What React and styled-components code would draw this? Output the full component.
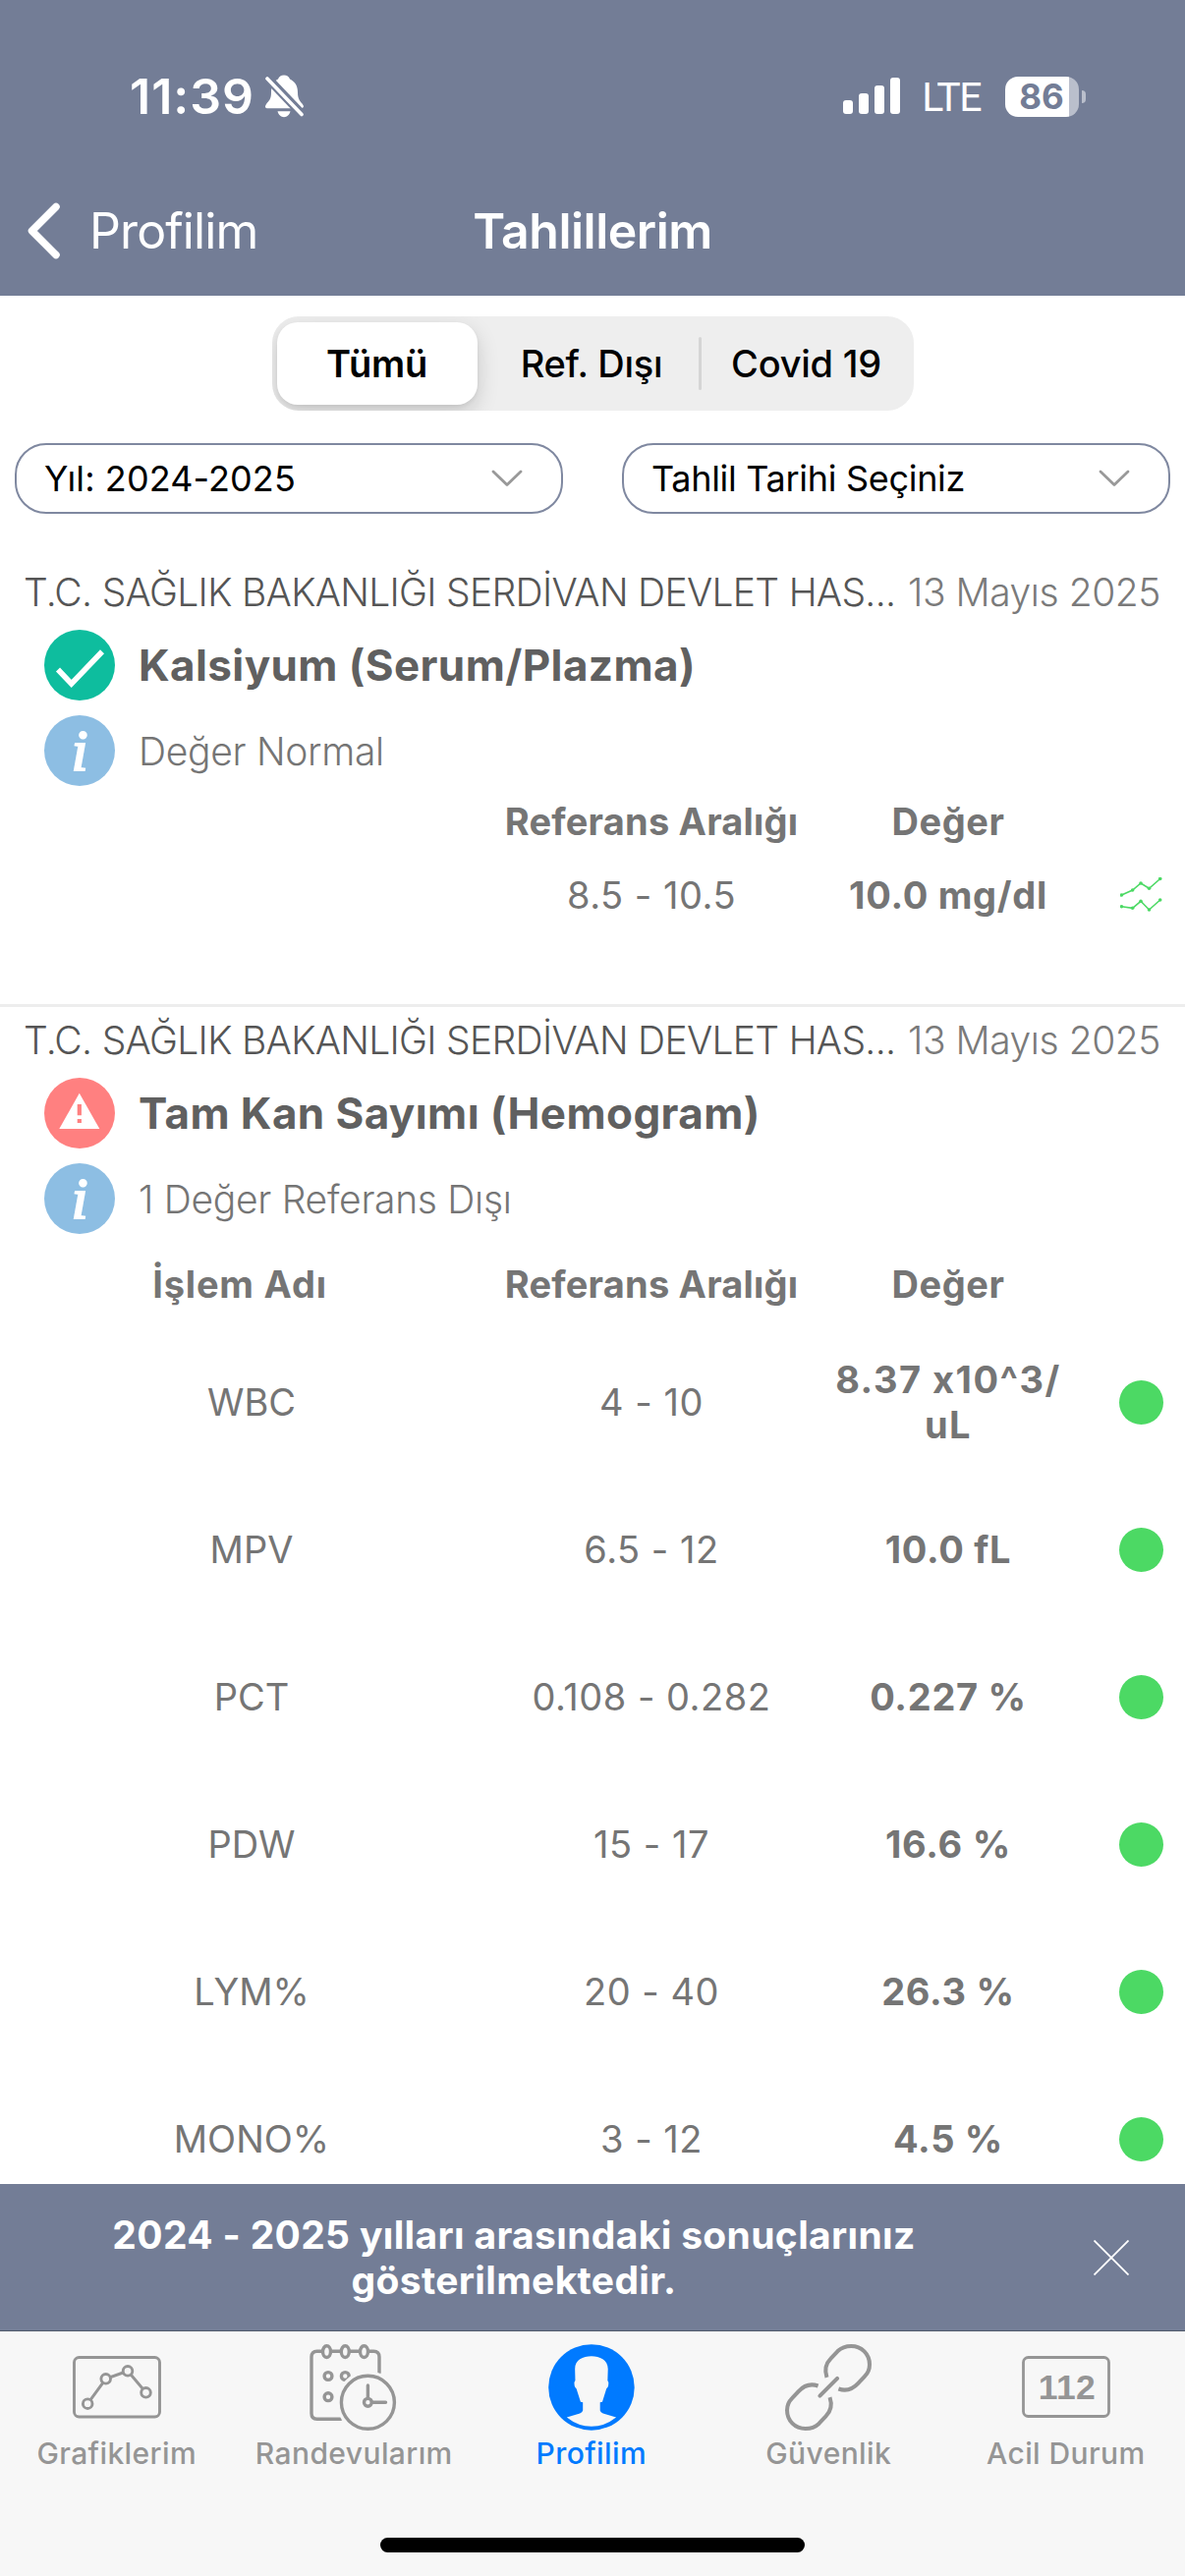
import React, { Component } from 'react'
import styled, { createGlobalStyle, ThemeProvider } from 'styled-components'

const theme = {
    primary: '#737D96',
    active: '#007AFF',
    inactive: '#959595',
    ok: '#4CD964',
    text: '#757575'
}

const GlobalStyle = createGlobalStyle`
    body {
        margin: 0;
        background: #FFF;
        font-family: Inter, "Liberation Sans", sans-serif;
        font-feature-settings: "calt" 0;
    }
    * { box-sizing: border-box; }
    svg { display: block; flex: none; }
`;

const Screen = styled.div`
    display: flex;
    flex-direction: column;
    width: 1206px;
    height: 2622px;
    overflow: hidden;
    background: #FFF;
`;

//header
const Header = styled.header`
    flex: none;
    height: 301px;
    color: #FFF;
    background: ${props => props.theme.primary};
`;

const StatusBar = styled.div`
    display: flex;
    align-items: center;
    justify-content: space-between;
    height: 169px;
    padding: 27px 101px 0 132px;
`;

const Clock = styled.div`
    display: flex;
    align-items: center;
    gap: 11px;
    font-size: 50px;
    font-weight: 600;
    letter-spacing: 1px;
`;

const StatusRight = styled.div`
    display: flex;
    align-items: center;
`;

const Network = styled.span`
    margin: 2px 25px 0 22px;
    font-family: Roboto, sans-serif;
    font-size: 41px;
    font-weight: 400;
    letter-spacing: -1.5px;
`;

const Battery = styled.div`
    display: flex;
    align-items: center;
    justify-content: center;
    width: 75px;
    height: 41px;
    padding-right: 1px;
    border-radius: 13px;
    font-size: 35px;
    font-weight: 700;
    color: ${props => props.theme.primary};
    background: linear-gradient(to right, #FFF 65px, #BABFCC 65px);
`;

const BatteryTip = styled.div`
    width: 4px;
    height: 13px;
    margin-left: 3px;
    border-radius: 0 4px 4px 0;
    background: #BABFCC;
`;

const NavBar = styled.div`
    display: grid;
    grid-template-columns: 1fr auto 1fr;
    align-items: center;
    height: 132px;
    padding: 0 28px;
`;

const BackButton = styled.div`
    display: flex;
    align-items: center;
    gap: 29px;
    font-size: 50px;
    font-weight: 400;
    letter-spacing: -.9px;
`;

const NavTitle = styled.div`
    font-size: 50px;
    font-weight: 600;
    letter-spacing: -.5px;
`;

//filters
const Segmented = styled.div`
    flex: none;
    display: flex;
    align-items: center;
    align-self: center;
    width: 653px;
    height: 96px;
    margin-top: 21px;
    padding: 0 5px;
    border-radius: 27px;
    background: #EEE;
    overflow: hidden;
`;

const Segment = styled.div`
    flex: none;
    display: flex;
    align-items: center;
    justify-content: center;
    width: ${props => props.$width}px;
    height: 84px;
    margin-right: ${props => props.$selected ? 8 : 0}px;
    border-radius: 21px;
    font-size: 38px;
    letter-spacing: -.25px;
    color: #000;
    font-weight: ${props => props.$selected ? 600 : 500};
    background: ${props => props.$selected ? '#FFF' : 'transparent'};
    box-shadow: ${props => props.$selected ? '0 8px 22px rgba(0,0,0,.16), 0 2px 4px rgba(0,0,0,.06)' : 'none'};
`;

const SegmentLine = styled.div`
    flex: none;
    width: 3px;
    height: 54px;
    border-radius: 2px;
    background: #D5D5D5;
`;

const Filters = styled.div`
    flex: none;
    display: flex;
    justify-content: space-between;
    margin-top: 33px;
    padding: 0 15px;
`;

const Select = styled.div`
    display: flex;
    align-items: center;
    justify-content: space-between;
    width: 558px;
    height: 72px;
    padding: 0 39px 0 28px;
    border: 2px solid #7F88A0;
    border-radius: 32px;
    font-size: 36px;
    letter-spacing: ${props => props.$spacing || 0}px;
    color: #000;
`;

//results
const List = styled.main`
    flex: 1;
    min-height: 0;
    margin-top: 46px;
    overflow: hidden;
`;

const Section = styled.section`
    height: ${props => props.$height || 'auto'};
    border-bottom: 3px solid #EDEDED;
`;

const SectionHead = styled.div`
    display: flex;
    align-items: center;
    justify-content: space-between;
    height: 66px;
    padding: 0 25px 0 24px;
    font-size: 39px;
    font-weight: 300;
    white-space: nowrap;
`;

const Hospital = styled.span`
    color: #555;
    letter-spacing: -.7px;
`;

const DateText = styled.span`
    color: #7A7A7A;
    letter-spacing: -.45px;
`;

const Line = styled.div`
    display: flex;
    align-items: center;
    gap: 24px;
    height: 72px;
    margin-top: ${props => props.$top}px;
    padding-left: 45px;
`;

const TestName = styled.h2`
    margin: 0;
    font-size: 44px;
    font-weight: 700;
    color: #606060;
    letter-spacing: .4px;
`;

const Summary = styled.span`
    font-size: 39px;
    font-weight: 300;
    letter-spacing: -.3px;
    color: ${props => props.theme.text};
`;

const Row = styled.div`
    display: grid;
    grid-template-columns: 512px 302px 302px 90px;
    align-items: center;
    justify-items: center;
    height: ${props => props.$height}px;
    padding-top: ${props => props.$top || 0}px;
    font-size: 38px;
    line-height: 46px;
    color: ${props => props.theme.text};
`;

const HeadCell = styled.span`
    font-weight: 700;
    letter-spacing: ${props => props.$spacing || .2}px;
    padding-right: ${props => props.$shift || 0}px;
`;

const Range = styled.span`
    letter-spacing: .5px;
`;

const Value = styled.span`
    font-weight: 700;
    letter-spacing: ${props => props.$spacing || .7}px;
    text-align: center;
    white-space: pre-line;
`;

const Dot = styled.div`
    width: 45px;
    height: 45px;
    border-radius: 50%;
    background: ${props => props.theme.ok};
`;

//bottom
const Notice = styled.div`
    flex: none;
    display: grid;
    grid-template-columns: 1046px 1fr;
    align-items: center;
    height: 150px;
    border-bottom: 1px solid #505A6B;
    color: #FFF;
    background: ${props => props.theme.primary};
`;

const NoticeText = styled.p`
    margin: 0;
    font-size: 39px;
    line-height: 46px;
    font-weight: 700;
    letter-spacing: .34px;
    text-align: center;
    white-space: pre-line;
`;

const CloseButton = styled.div`
    padding-left: 67px;
`;

const TabBar = styled.nav`
    flex: none;
    height: 249px;
    background: #F7F7F7;
`;

const Tabs = styled.div`
    display: grid;
    grid-template-columns: repeat(5, 241.5px);
    height: 210px;
    margin-left: -2px;
`;

const Tab = styled.div`
    display: flex;
    flex-direction: column;
    align-items: center;
    padding-top: 13px;
    font-size: 30px;
    font-weight: 500;
    line-height: 36px;
    letter-spacing: .4px;
    color: ${props => props.$active ? props.theme.active : props.theme.inactive};
`;

const TabIcon = styled.div`
    display: flex;
    align-items: center;
    height: 88px;
    margin-bottom: 5px;
`;

const HomeIndicator = styled.div`
    width: 432px;
    height: 15px;
    margin: 0 auto;
    border-radius: 8px;
    background: #000;
`;

//icons
const BellOff = () => (
    <svg width="39" height="44" viewBox="0 0 39 44">
        <path fill="#FFF" d="M19 .5c-3 0-5 1.500-6 4C8 7 6 12 6 18c0 7-2 8-5 12-2 3-1 4.300 2 4.300h32c4 0 4.500-1.800 3.500-3.300C36 27 33 26 33 18c0-7-3-11-8-13.500-1-2.500-3-4-6-4z" />
        <path fill="#FFF" d="M12.500 37.300h13c-.8 3.500-3.500 5.900-6.500 5.900s-5.700-2.400-6.500-5.900z" />
        <path stroke="#737D96" strokeWidth="9" d="M-2 -1L41 44" />
        <path stroke="#FFF" strokeWidth="3.600" strokeLinecap="round" d="M2 4L37 40.500" />
    </svg>
)

const Signal = () => (
    <svg width="58" height="38" viewBox="0 0 58 38" fill="#FFF">
        <rect x="0" y="23" width="10" height="14" rx="3" />
        <rect x="16" y="16" width="10" height="21" rx="3" />
        <rect x="32" y="8" width="10" height="29" rx="3" />
        <rect x="48" y="0" width="10" height="37" rx="3" />
    </svg>
)

const Back = () => (
    <svg width="34" height="58" viewBox="0 0 34 58" fill="none" stroke="#FFF" strokeWidth="7.500" strokeLinecap="round" strokeLinejoin="round">
        <path d="M29 4.500L4.500 29 29 53.500" />
    </svg>
)

const Chevron = () => (
    <svg width="32" height="18" viewBox="0 0 32 18" fill="none" stroke="#999" strokeWidth="2.800" strokeLinecap="round" strokeLinejoin="round">
        <path d="M2 2l14 13.500L30 2" />
    </svg>
)

const CheckIcon = () => (
    <svg width="72" height="72" viewBox="0 0 72 72">
        <circle cx="36" cy="36" r="36" fill="#0EBD9E" />
        <path fill="none" stroke="#FFF" strokeWidth="5.600" d="M14 40.500l13.700 14.500L59 22.300" />
    </svg>
)

const WarningIcon = () => (
    <svg width="72" height="72" viewBox="0 0 72 72">
        <circle cx="36" cy="36" r="36" fill="#FF8080" />
        <path fill="#FFF" d="M35.800 15.700L56.300 52H15.300z" />
        <path fill="#FF8080" d="M33.700 27h4.200v11.300h-4.200zM33.700 42h4.200v4h-4.200z" />
    </svg>
)

const InfoIcon = () => (
    <svg width="72" height="72" viewBox="0 0 72 72">
        <circle cx="36" cy="36" r="36" fill="#8DBEE3" />
        <text x="36" y="55.500" textAnchor="middle" fill="#FFF" stroke="#FFF" strokeWidth="2.200" fontFamily="Liberation Serif, serif" fontSize="60" fontStyle="italic">i</text>
    </svg>
)

const upper = [[1.5, 18], [12.6, 13], [21, 6], [29.5, 11.3], [40.7, 1.5]]
const lower = [[1.5, 29.7], [12.6, 31.3], [21, 24.3], [29.5, 33], [40.7, 23]]

const TrendIcon = () => (
    <svg width="43" height="35" viewBox="0 0 43 35">
        {[upper, lower].map((points, i) => {
            return <g key={i} fill={theme.ok}>
                <polyline points={points.join(' ')} fill="none" stroke={theme.ok} strokeWidth="1.600" />
                {points.map(([x, y]) => <circle key={x} cx={x} cy={y} r="1.800" />)}
            </g>
        })}
    </svg>
)

const CloseIcon = () => (
    <svg width="36" height="36" viewBox="0 0 36 36" stroke="#FFF" strokeWidth="1.800">
        <path d="M.5 .5l35 35M35.500 .5l-35 35" />
    </svg>
)

const nodes = [[15.2, 48.7], [33.7, 23.3], [56, 15.3], [74.5, 37.3]]

const ChartIcon = () => (
    <svg width="90" height="64" viewBox="0 0 90 64" fill="none" stroke="currentColor" strokeWidth="2.900">
        <rect x="1.500" y="1.500" width="87" height="60.500" rx="5" />
        <polyline points={nodes.join(' ')} />
        {nodes.map(([x, y]) => <circle key={x} cx={x} cy={y} r="4.800" fill="#F7F7F7" />)}
    </svg>
)

const CalendarIcon = () => (
    <svg width="90" height="88" viewBox="0 0 90 88" fill="none" stroke="currentColor" strokeWidth="3.400" strokeLinecap="round">
        <path d="M71 29V13q0-5.700-5.700-5.700H7.700Q2 7.300 2 13v57.500q0 5.800 5.700 5.800H32" />
        {[17.5, 36.3, 55.5].map(x => <ellipse key={x} cx={x} cy="7.600" rx="4" ry="5.900" fill="#F7F7F7" />)}
        <circle cx="19" cy="32.500" r="3.900" />
        <circle cx="36.300" cy="32.500" r="3.900" />
        <circle cx="19" cy="53.700" r="3.900" />
        <circle cx="59.400" cy="59.300" r="32" fill="#F7F7F7" stroke="none" />
        <circle cx="59.400" cy="59.300" r="27" />
        <path d="M59.400 55V42M63.500 59.300h14" />
        <circle cx="59.400" cy="59.300" r="3.900" />
    </svg>
)

const ProfileIcon = () => (
    <svg width="88" height="88" viewBox="0 0 87.500 87.500">
        <circle cx="43.700" cy="43.700" r="43.500" fill="currentColor" />
        <path fill="#F7F7F7" d="M43.700 12.300C52 12.300 60.400 16 60.400 25L60 36.700q1.600 1.500.8 5c-.3 2-1.500 2.500-2 3.500L54.700 58.300 52.400 59v8q.5 2 3 3.200L68.700 74Q57 83.300 43.700 83.300T18.700 74L32 70.200q2.500-1.200 3-3.200v-8l-2.300-.7L28.500 45.200c-.5-1-1.700-1.500-2-3.500q-.8-3.500.8-5L27 25C27 16 35 12.300 43.700 12.300z" />
    </svg>
)

const LinkIcon = () => (
    <svg width="88" height="88" viewBox="0 0 87 87" fill="none" stroke="currentColor" strokeWidth="4">
        <path d="M42 33.500C39.500 26 41.500 19 46 14.500L53 7c4-3.800 9-5 13.500-5C77 2 85 10 85 20.500c0 5-2 9-5 12l-6.500 7C68 45.500 61 47.500 53.800 45" />
        <path transform="rotate(180 43.500 43.500)" d="M42 33.500C39.500 26 41.500 19 46 14.500L53 7c4-3.800 9-5 13.500-5C77 2 85 10 85 20.500c0 5-2 9-5 12l-6.500 7C68 45.500 61 47.500 53.800 45" />
        <path d="M35 52l17.500-17.500" strokeLinecap="round" />
    </svg>
)

const EmergencyIcon = () => (
    <svg width="90" height="64" viewBox="0 0 90 64">
        <rect x="1.500" y="1.500" width="87" height="60" rx="5" fill="none" stroke="currentColor" strokeWidth="2.800" />
        <text x="46" y="44" textAnchor="middle" fill="currentColor" fontFamily="Liberation Sans, sans-serif" fontSize="35.500" fontWeight="700">112</text>
    </svg>
)

class App extends Component {

    state = {
        hospital: 'T.C. SAĞLIK BAKANLIĞI SERDİVAN DEVLET HAS...',
        date: '13 Mayıs 2025',
        rows: [
            { name: 'WBC', range: '4 - 10', value: '8.37 x10^3/\nuL', spacing: 1.5 },
            { name: 'MPV', range: '6.5 - 12', value: '10.0 fL' },
            { name: 'PCT', range: '0.108 - 0.282', value: '0.227 %' },
            { name: 'PDW', range: '15 - 17', value: '16.6 %' },
            { name: 'LYM%', range: '20 - 40', value: '26.3 %' },
            { name: 'MONO%', range: '3 - 12', value: '4.5 %' }
        ],
        tabs: [
            { label: 'Grafiklerim', icon: ChartIcon },
            { label: 'Randevularım', icon: CalendarIcon },
            { label: 'Profilim', icon: ProfileIcon, active: true },
            { label: 'Güvenlik', icon: LinkIcon },
            { label: 'Acil Durum', icon: EmergencyIcon }
        ]
    }

    render() {
        const { hospital, date, rows, tabs } = this.state

        return (
        <ThemeProvider theme={theme}>
            <GlobalStyle />
            <Screen>
                <Header>
                    <StatusBar>
                        <Clock>11:39<BellOff /></Clock>
                        <StatusRight>
                            <Signal />
                            <Network>LTE</Network>
                            <Battery>86</Battery>
                            <BatteryTip />
                        </StatusRight>
                    </StatusBar>
                    <NavBar>
                        <BackButton><Back />Profilim</BackButton>
                        <NavTitle>Tahlillerim</NavTitle>
                    </NavBar>
                </Header>

                <Segmented>
                    <Segment $selected $width={204}>Tümü</Segment>
                    <Segment $width={217}>Ref. Dışı</Segment>
                    <SegmentLine />
                    <Segment $width={214}>Covid 19</Segment>
                </Segmented>
                <Filters>
                    <Select $spacing={.1}>Yıl: 2024-2025<Chevron /></Select>
                    <Select $spacing={-.3}>Tahlil Tarihi Seçiniz<Chevron /></Select>
                </Filters>

                <List>
                    <Section $height="456px">
                        <SectionHead>
                            <Hospital>{hospital}</Hospital>
                            <DateText>{date}</DateText>
                        </SectionHead>
                        <Line $top={6}><CheckIcon /><TestName>Kalsiyum (Serum/Plazma)</TestName></Line>
                        <Line $top={15}><InfoIcon /><Summary>Değer Normal</Summary></Line>
                        <Row $height={72}>
                            <span />
                            <HeadCell>Referans Aralığı</HeadCell>
                            <HeadCell $spacing={.6}>Değer</HeadCell>
                        </Row>
                        <Row $height={77}>
                            <span />
                            <Range>8.5 - 10.5</Range>
                            <Value>10.0 mg/dl</Value>
                            <TrendIcon />
                        </Row>
                    </Section>

                    <Section>
                        <SectionHead>
                            <Hospital>{hospital}</Hospital>
                            <DateText>{date}</DateText>
                        </SectionHead>
                        <Line $top={6}><WarningIcon /><TestName>Tam Kan Sayımı (Hemogram)</TestName></Line>
                        <Line $top={15}><InfoIcon /><Summary>1 Değer Referans Dışı</Summary></Line>
                        <Row $height={96} $top={5}>
                            <HeadCell $shift={24} $spacing={.8}>İşlem Adı</HeadCell>
                            <HeadCell>Referans Aralığı</HeadCell>
                            <HeadCell $spacing={.6}>Değer</HeadCell>
                        </Row>
                        {rows.map(row => {
                            return <Row key={row.name} $height={150}>
                                <span>{row.name}</span>
                                <Range>{row.range}</Range>
                                <Value $spacing={row.spacing}>{row.value}</Value>
                                <Dot />
                            </Row>
                        })}
                    </Section>
                </List>

                <Notice>
                    <NoticeText>{'2024 - 2025 yılları arasındaki sonuçlarınız\ngösterilmektedir.'}</NoticeText>
                    <CloseButton><CloseIcon /></CloseButton>
                </Notice>
                <TabBar>
                    <Tabs>
                        {tabs.map(({ label, icon: Icon, active }) => {
                            return <Tab key={label} $active={active}>
                                <TabIcon><Icon /></TabIcon>
                                {label}
                            </Tab>
                        })}
                    </Tabs>
                    <HomeIndicator />
                </TabBar>
            </Screen>
        </ThemeProvider>
        );
    }
}

export default App;
